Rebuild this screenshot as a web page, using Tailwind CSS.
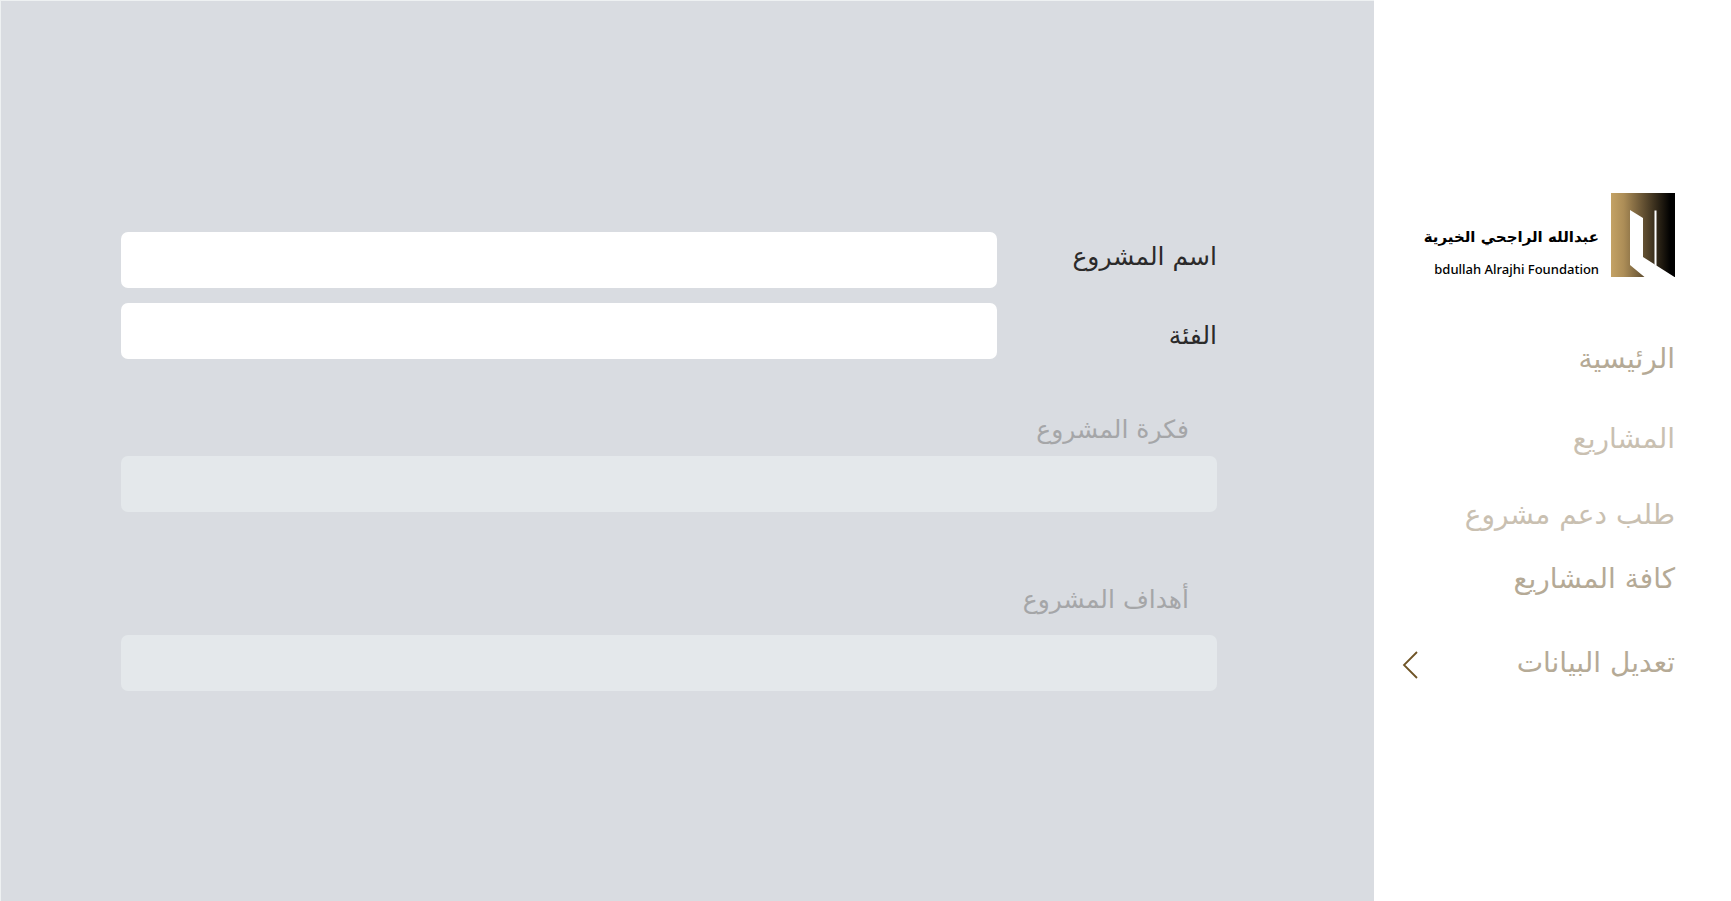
<!DOCTYPE html>
<html lang="ar" dir="rtl">
<head>
    <meta charset="UTF-8" />
    <meta name="viewport" content="width=device-width, initial-scale=1.0" />
    <title>تعديل البيانات</title>
    <script src="https://cdn.jsdelivr.net/npm/@tailwindcss/browser@4"></script>
</head>
<body class="bg-white font-['DejaVu_Sans',sans-serif]">
    <div class="flex min-h-screen">
        <!-- Sidebar -->
        <aside class="w-[357px] shrink-0 bg-white pt-[193px] pr-14 pl-7">
            <a href="#" class="flex gap-3">
                <svg class="w-16 h-[84px] shrink-0" viewBox="0 0 64 84" aria-hidden="true">
                    <defs>
                        <linearGradient id="gold" x1="0" x2="1" y1="0" y2="0">
                            <stop offset="0" stop-color="#c4a265" />
                            <stop offset="0.2" stop-color="#ac8d57" />
                            <stop offset="0.5" stop-color="#655233" />
                            <stop offset="0.93" stop-color="#000" />
                        </linearGradient>
                    </defs>
                    <rect width="64" height="84" fill="url(#gold)" />
                    <path d="M19 17L32 25V64L63.500 84H33.500L19 72Z" fill="#fff" />
                    <path d="M43.500 17.500H45.500V73L43.500 71.500Z" fill="#fff" />
                </svg>
                <span class="flex flex-col pt-6 text-black">
                    <span class="text-[15px] leading-10 font-bold whitespace-nowrap">عبدالله الراجحي الخيرية</span>
                    <span dir="ltr" class="pt-[2px] text-right text-[13px] leading-5 font-medium whitespace-nowrap font-['Noto_Sans',sans-serif]">bdullah Alrajhi Foundation</span>
                </span>
            </a>

            <nav class="mt-[60px] text-[28px] leading-10 text-[#b5aa96]">
                <a href="#" class="block">الرئيسية</a>
                <a href="#" class="block mt-10 text-[#c9c0b1]">المشاريع</a>
                <a href="#" class="block mt-9 text-[#c9c0b1]">طلب دعم مشروع</a>
                <a href="#" class="block mt-6">كافة المشاريع</a>
                <a href="#" class="flex items-center justify-between mt-11">
                    تعديل البيانات
                    <svg class="w-4 h-7 mt-1" viewBox="0 0 16 28" fill="none" stroke="#6f5426" stroke-width="1.800" aria-hidden="true">
                        <path d="M15 1L2 14L15 27" />
                    </svg>
                </a>
            </nav>
        </aside>

        <!-- Project form -->
        <main class="flex-1 bg-[#d9dce1] border-t border-l border-[#eef1f2] pt-[231px] pr-[157px] pl-[120px]">
            <form class="text-[25px] leading-10">
                <div class="flex">
                    <div class="flex flex-col gap-[39px] w-[220px] shrink-0 pt-[5px] text-[#2b2a2a]">
                        <label for="name">اسم المشروع</label>
                        <label for="category">الفئة</label>
                    </div>
                    <div class="flex flex-1 flex-col gap-[15px]">
                        <input id="name" type="text" class="w-full h-14 px-4 bg-white rounded-[7px]" />
                        <input id="category" type="text" class="w-full h-14 px-4 bg-white rounded-[7px]" />
                    </div>
                </div>

                <div class="mt-[51px]">
                    <label for="idea" class="block pr-7 text-[#a5a6a8]">فكرة المشروع</label>
                    <input id="idea" type="text" class="block w-full h-14 mt-[6px] px-4 bg-[#e4e8eb] rounded-[7px]" />
                </div>

                <div class="mt-[68px]">
                    <label for="goals" class="block pr-7 text-[#a5a6a8]">أهداف المشروع</label>
                    <input id="goals" type="text" class="block w-full h-14 mt-[15px] px-4 bg-[#e4e8eb] rounded-[7px]" />
                </div>
            </form>
        </main>
    </div>
</body>
</html>
